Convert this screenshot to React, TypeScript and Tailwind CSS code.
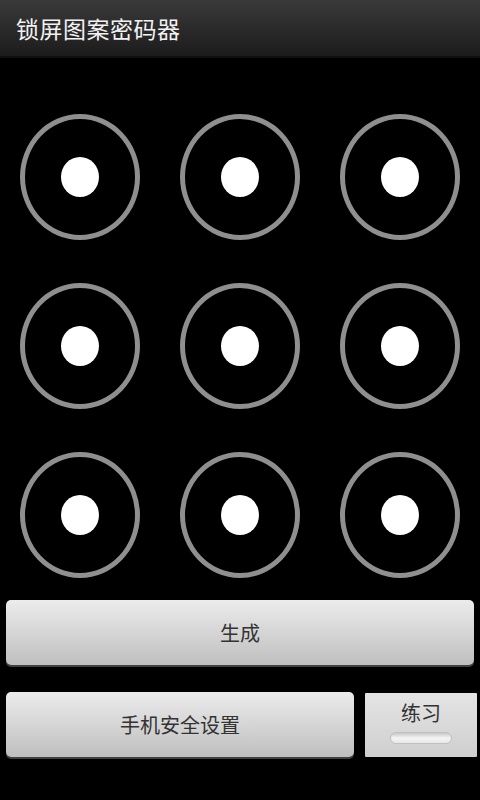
import React from "react";

const font = { fontFamily: '"Noto Sans CJK SC", "Noto Sans", sans-serif' };

function Dot() {
  return (
    <div className="flex items-center justify-center h-[169px]">
      <div className="w-[120px] h-[126px] rounded-[50%] border-[5px] border-[#8f8f8f] flex items-center justify-center">
        <div className="w-[38px] h-[40px] rounded-[50%] bg-white" />
      </div>
    </div>
  );
}

export default function App() {
  return (
    <div className="w-[480px] h-[800px] bg-black flex flex-col" style={font}>
      <div className="h-[58px] bg-gradient-to-b from-[#3a3a3a] to-[#1c1c1c] flex items-center pl-[16px] border-b-[2px] border-[#0f0f0f]">
        <span className="text-[23px] text-[#f2f2f2] leading-none tracking-[0.5px]">锁屏图案密码器</span>
      </div>
      <div className="grid grid-cols-3 pt-[34px]">
        {Array.from({ length: 9 }).map((_, i) => (
          <Dot key={i} />
        ))}
      </div>
      <div className="px-[6px] mt-[1px]">
        <div className="h-[65px] rounded-[5px] bg-gradient-to-b from-[#ececec] to-[#bfbfbf] shadow-[0_2px_0_#404040] flex items-center justify-center">
          <span className="text-[20px] text-[#333]">生成</span>
        </div>
      </div>
      <div className="flex pl-[6px] pr-[3px] mt-[27px] gap-[11px]">
        <div className="w-[348px] h-[65px] rounded-[5px] bg-gradient-to-b from-[#ececec] to-[#bfbfbf] shadow-[0_2px_0_#404040] flex items-center justify-center">
          <span className="text-[20px] text-[#333]">手机安全设置</span>
        </div>
        <div className="w-[112px] h-[64px] mt-[1px] rounded-[1px] bg-gradient-to-b from-[#e4e4e4] to-[#cfcfcf] flex flex-col items-center pt-[5px]">
          <span className="text-[20px] text-[#333] leading-[30px]">练习</span>
          <div className="mt-[4px] w-[62px] h-[12px] rounded-full bg-gradient-to-b from-[#c8c8c8] via-[#f4f4f4] to-[#e8e8e8] border border-[#c0c0c0]" />
        </div>
      </div>
    </div>
  );
}
